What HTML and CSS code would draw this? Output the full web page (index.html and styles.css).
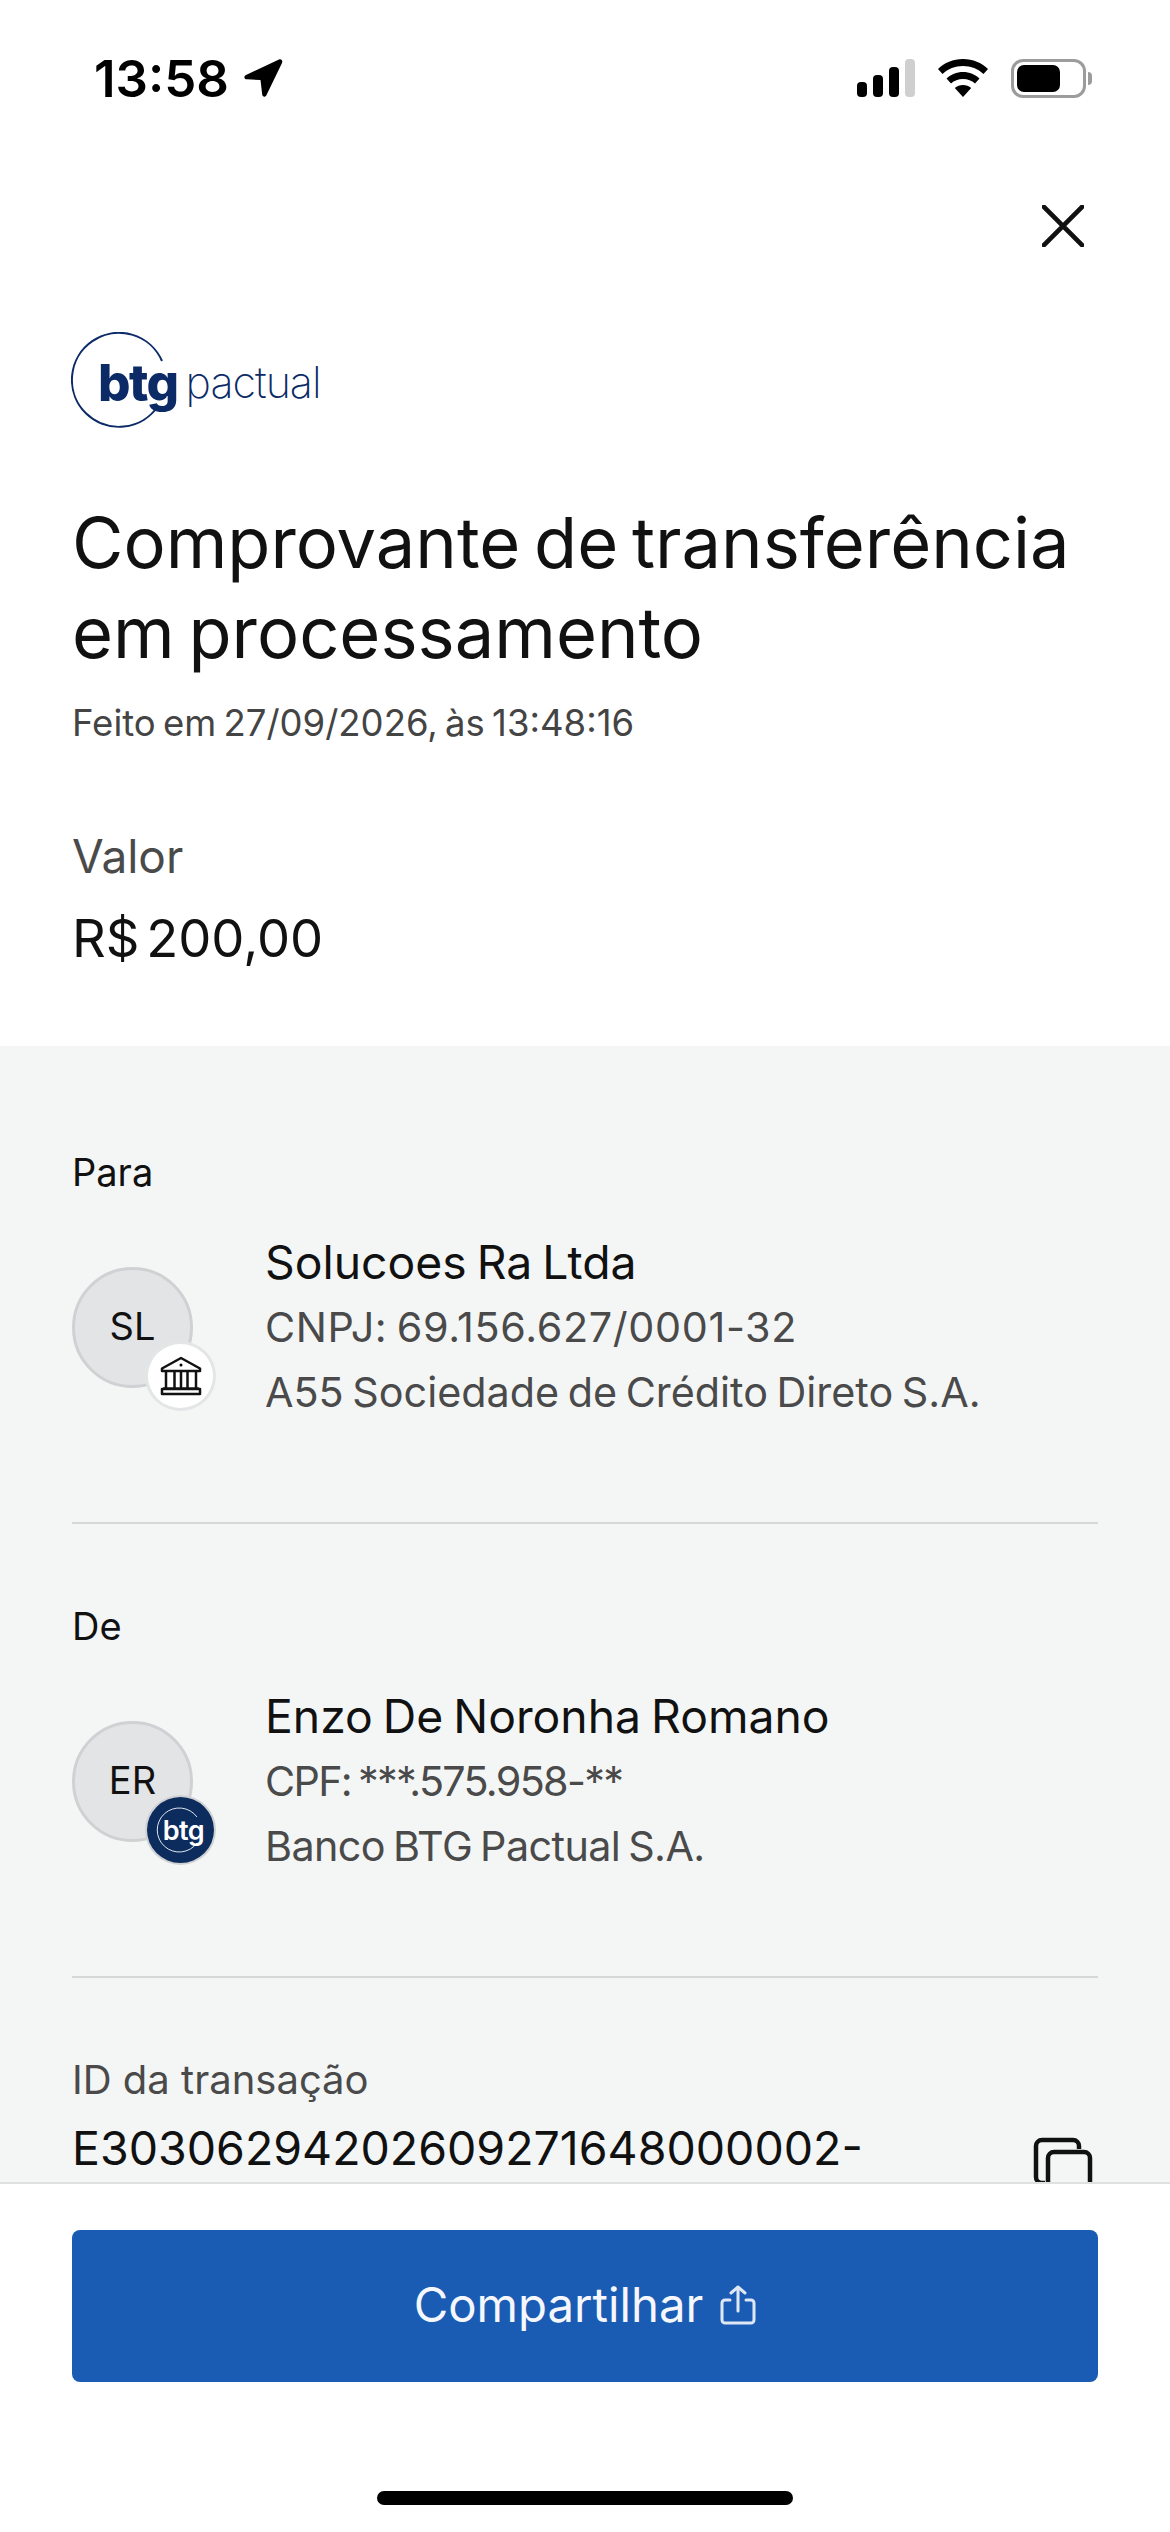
FILE: index.html
```html
<!DOCTYPE html>
<html lang="pt-BR">
<head>
    <meta charset="UTF-8">
    <meta name="viewport" content="width=device-width, initial-scale=1.0">
    <title>Comprovante de transferência</title>
    <link rel="stylesheet" href="styles.css">
</head>
<body>
    <div class="phone">
        <div class="status-bar">
            <div class="status-time">
                <span>13:58</span>
                <svg class="location-icon" viewBox="0 0 40 40"><path d="M36 1.500 3 17c-2.500 1.200-2 4 .8 4.300L17.500 22l1.700 14.500c.3 2.500 3 3 4.200.7L39 5c1-2.500-.7-4.300-3-3.500Z"/></svg>
            </div>
            <div class="status-icons">
                <svg class="signal-icon" viewBox="0 0 58 38">
                    <rect x="0" y="23" width="10" height="15" rx="4"/>
                    <rect x="16" y="16" width="10" height="22" rx="4"/>
                    <rect x="32" y="8" width="10" height="30" rx="4"/>
                    <rect x="48" y="0" width="10" height="38" rx="4" fill="#cfcfcf"/>
                </svg>
                <svg class="wifi-icon" viewBox="0 0 52 38">
                    <path d="M26 0C16 0 7.500 3.800 1 10l4.500 5C11 9.800 18 7 26 7s15 2.800 20.500 8l4.500-5C44.500 3.800 36 0 26 0Z"/>
                    <path d="M26 13c-6.500 0-12 2.400-16.500 6.500l4.500 5C17.200 21.500 21.300 20 26 20s8.800 1.500 12 4.500l4.500-5C38 15.400 32.500 13 26 13Z"/>
                    <path d="M26 26c-3.200 0-6 1.100-8.200 3L26 38l8.200-9c-2.200-1.900-5-3-8.200-3Z"/>
                </svg>
                <div class="battery">
                    <div class="battery-body"><div class="battery-fill"></div></div>
                    <div class="battery-nub"></div>
                </div>
            </div>
        </div>

        <div class="close-row">
            <svg class="close-icon" viewBox="0 0 44 44"><path d="M2 2l40 40M42 2 2 42"/></svg>
        </div>

        <header class="summary">
            <div class="logo">
                <svg class="logo-ring" viewBox="0 0 96 96"><path d="M91 29A47 47 0 1 0 87 74"/></svg>
                <span class="logo-btg">btg</span>
                <span class="logo-pactual">pactual</span>
            </div>
            <h1>Comprovante de transferência em processamento</h1>
            <p class="made-at">Feito em 27/09/2026, às 13:48:16</p>
            <p class="amount-label">Valor</p>
            <p class="amount">R$ 200,00</p>
        </header>

        <main class="details">
            <section class="party party-first">
                <p class="section-label">Para</p>
                <div class="party-row">
                    <div class="avatar">
                        SL
                        <div class="badge badge-bank">
                            <svg viewBox="0 0 42 40">
                                <path class="bank-stroke" d="M2 12.500 21 2l19 10.500V15H2ZM6 15v17M14.500 15v17M21 15v17M27.500 15v17M36 15v17M3 32.500h36M2 38h38v-5H2Z"/>
                                <circle cx="21" cy="9" r="1.500"/>
                            </svg>
                        </div>
                    </div>
                    <div class="party-info">
                        <p class="party-name">Solucoes Ra Ltda</p>
                        <p class="doc-wide">CNPJ: 69.156.627/0001-32</p>
                        <p>A55 Sociedade de Crédito Direto S.A.</p>
                    </div>
                </div>
            </section>
            <section class="party">
                <p class="section-label">De</p>
                <div class="party-row">
                    <div class="avatar">
                        ER
                        <div class="badge badge-btg">
                            <svg class="badge-ring" viewBox="0 0 46 46"><path d="M41 10A22 22 0 1 0 41 36"/></svg>
                            <span>btg</span>
                        </div>
                    </div>
                    <div class="party-info">
                        <p class="party-name">Enzo De Noronha Romano</p>
                        <p class="doc-narrow">CPF: ***.575.958-**</p>
                        <p class="bank-name">Banco BTG Pactual S.A.</p>
                    </div>
                </div>
            </section>
            <section class="transaction">
                <p class="transaction-label">ID da transação</p>
                <div class="transaction-row">
                    <p class="transaction-id">E30306294202609271648000002-</p>
                    <svg class="copy-icon" viewBox="0 0 60 60">
                        <path d="M12 46H9a6 6 0 0 1-6-6V9a6 6 0 0 1 6-6h31a6 6 0 0 1 6 6v3"/>
                        <rect x="15" y="15" width="42" height="42" rx="6"/>
                    </svg>
                </div>
            </section>
        </main>

        <footer class="actions">
            <button class="share-button">
                Compartilhar
                <svg class="share-icon" viewBox="0 0 36 40"><path d="M18 26V2M11 8l7-6 7 6M10 15H5a3 3 0 0 0-3 3v17a3 3 0 0 0 3 3h26a3 3 0 0 0 3-3V18a3 3 0 0 0-3-3h-5"/></svg>
            </button>
            <div class="home-indicator"></div>
        </footer>
    </div>
</body>
</html>
```

FILE: styles.css
```css
* {
    margin: 0;
    padding: 0;
    box-sizing: border-box;
    font-family: Inter, 'Noto Sans', sans-serif;
}

body {
    background: white;
}

.phone {
    width: 1170px;
    height: 2532px;
    display: flex;
    flex-direction: column;
    overflow: hidden;
    color: #111;
}

/* status bar */
.status-bar {
    height: 156px;
    padding: 0 78px 0 94px;
    display: flex;
    align-items: center;
    justify-content: space-between;
}

.status-time {
    display: flex;
    align-items: center;
    gap: 14px;
    font-size: 51px;
    font-weight: 600;
    color: black;
}

.location-icon {
    width: 40px;
    height: 40px;
}

.status-icons {
    display: flex;
    align-items: center;
}

.signal-icon {
    width: 58px;
    height: 38px;
}

.wifi-icon {
    width: 52px;
    height: 38px;
    margin-left: 22px;
}

.battery {
    display: flex;
    align-items: center;
    margin-left: 22px;
}

.battery-body {
    width: 75px;
    height: 39px;
    padding: 3px;
    border: 3px solid #9c9c9c;
    border-radius: 12px;
}

.battery-fill {
    width: 43px;
    height: 100%;
    background: black;
    border-radius: 7px;
}

.battery-nub {
    width: 4px;
    height: 13px;
    margin-left: 2px;
    background: #9c9c9c;
    border-radius: 0 4px 4px 0;
}

/* close */
.close-row {
    height: 140px;
    padding-right: 86px;
    display: flex;
    align-items: center;
    justify-content: flex-end;
}

.close-icon {
    width: 42px;
    height: 42px;
    fill: none;
    stroke: #111;
    stroke-width: 5;
    stroke-linecap: round;
}

/* summary */
.summary {
    height: 750px;
    padding: 36px 72px 0;
}

.logo {
    position: relative;
    width: 260px;
    height: 96px;
    padding-top: 4px;
    display: flex;
    align-items: center;
    color: #0b2a66;
}

.logo-ring {
    position: absolute;
    left: -1px;
    top: 0;
    width: 96px;
    height: 96px;
    fill: none;
    stroke: #0b2a66;
    stroke-width: 2;
}

.logo-btg {
    margin-left: 26px;
    font-size: 51px;
    font-weight: 800;
    letter-spacing: -1.500px;
}

.logo-pactual {
    margin-left: 8px;
    font-size: 43px;
    font-weight: 200;
    letter-spacing: -1px;
}

h1 {
    margin-top: 70px;
    font-size: 70.400px;
    font-weight: 420;
    line-height: 90px;
    word-spacing: -6px;
}

.made-at {
    margin-top: 23px;
    font-size: 36.500px;
    line-height: 44px;
    word-spacing: -3px;
    color: #444;
}

.amount-label {
    margin-top: 86px;
    font-size: 46px;
    line-height: 50px;
    color: #4a4a4a;
}

.amount {
    margin-top: 25px;
    font-size: 52.500px;
    line-height: 64px;
    word-spacing: -8px;
}

/* details */
.details {
    flex: 1;
    min-height: 0;
    padding: 0 72px;
    overflow: hidden;
    background: #f4f6f6;
}

.party {
    padding: 79px 0 97px;
    border-bottom: 2px solid #d5d8d9;
}

.party-first {
    padding-top: 103px;
}

.section-label {
    font-size: 38px;
    line-height: 46px;
}

.party-row {
    margin-top: 35px;
    display: flex;
    align-items: center;
    gap: 72px;
}

.avatar {
    position: relative;
    width: 121px;
    height: 121px;
    padding-bottom: 4px;
    flex-shrink: 0;
    display: flex;
    align-items: center;
    justify-content: center;
    background: #e2e4e6;
    border: 3px solid #cfd1d3;
    border-radius: 50%;
    font-size: 38px;
}

.badge {
    position: absolute;
    left: 70px;
    top: 71px;
    width: 71px;
    height: 70px;
    display: flex;
    align-items: center;
    justify-content: center;
    border-radius: 50%;
}

.badge-bank {
    background: white;
    border: 3px solid #e4e5e6;
}

.badge-bank svg {
    width: 42px;
    height: 40px;
}

.bank-stroke {
    fill: none;
    stroke: #111;
    stroke-width: 2.500;
    stroke-linejoin: round;
}

.badge-btg {
    background: #0d2c5e;
    border: 2px solid #cfd1d3;
    color: white;
}

.badge-ring {
    position: absolute;
    left: 9px;
    top: 10px;
    width: 46px;
    height: 46px;
    fill: none;
    stroke: #dfe5ef;
    stroke-width: 1;
}

.badge-btg span {
    position: relative;
    margin-left: 6px;
    font-size: 27px;
    font-weight: 600;
    letter-spacing: -0.5px;
}

.party-info {
    font-size: 41.300px;
    line-height: 65px;
    word-spacing: -3px;
    color: #4a4a4a;
}

.party-name {
    font-size: 46.300px;
    color: #111;
}

/* the digits and asterisks in the original font have other widths */
.doc-wide {
    letter-spacing: 0.65px;
}

.doc-narrow {
    letter-spacing: -1.700px;
}

.bank-name {
    letter-spacing: -0.6px;
}

.transaction {
    padding-top: 79px;
}

.transaction-label {
    font-size: 40px;
    line-height: 46px;
    color: #4a4a4a;
}

.transaction-row {
    margin-top: 13px;
    display: flex;
    justify-content: space-between;
}

.transaction-id {
    font-size: 46.500px;
    line-height: 65px;
}

.copy-icon {
    width: 60px;
    height: 60px;
    margin-top: 21px;
    margin-right: 5px;
    flex-shrink: 0;
    fill: none;
    stroke: #111;
    stroke-width: 4.500;
}

/* footer */
.actions {
    height: 350px;
    padding: 46px 72px 0;
    display: flex;
    flex-direction: column;
    background: white;
    border-top: 2px solid #e0e0e0;
}

.share-button {
    height: 152px;
    padding-bottom: 3px;
    display: flex;
    align-items: center;
    justify-content: center;
    gap: 17px;
    background: #1a5cb4;
    border: none;
    border-radius: 8px;
    font-size: 47.300px;
    color: #f5f7fc;
}

.share-icon {
    width: 36px;
    height: 40px;
    fill: none;
    stroke: #dfe7f5;
    stroke-width: 3;
    stroke-linecap: round;
    stroke-linejoin: round;
}

.home-indicator {
    width: 416px;
    height: 14px;
    margin: 109px auto 0;
    background: black;
    border-radius: 7px;
}
```
